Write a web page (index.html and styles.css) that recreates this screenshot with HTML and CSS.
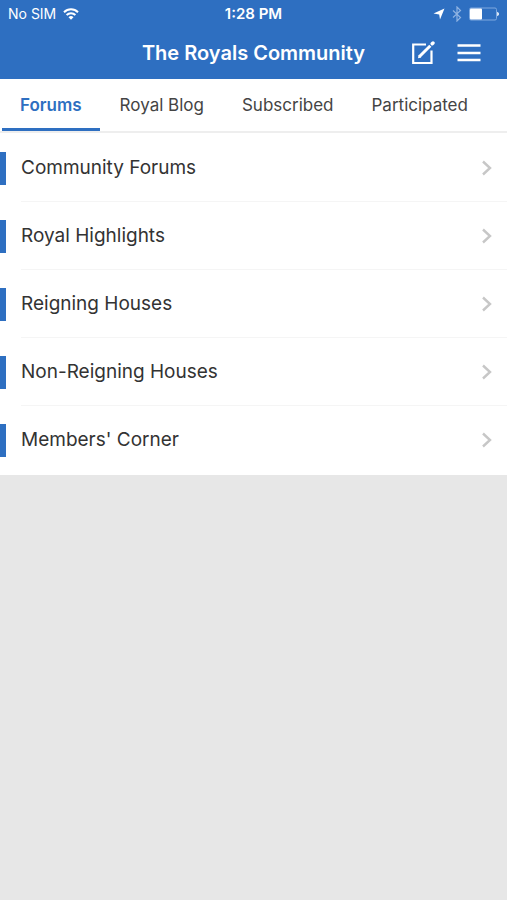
FILE: index.html
```html
<!DOCTYPE html>
<html lang="en">
<head>
  <meta charset="UTF-8">
  <meta name="viewport" content="width=device-width, initial-scale=1">
  <title>The Royals Community</title>
  <link rel="stylesheet" href="styles.css">
</head>
<body>
  <header class="header">
    <div class="status-bar">
      <div class="status-left">
        <span>No SIM</span>
        <svg class="wifi" width="16" height="12" viewBox="0 0 16 12" fill="none" stroke="#fff" stroke-width="2">
          <path d="M1 4.2a10 10 0 0 1 14 0"/>
          <path d="M3.6 7a6.3 6.3 0 0 1 8.8 0"/>
          <path d="M8 11.8 5.5 9.2a3.6 3.6 0 0 1 5 0z" fill="#fff" stroke="none"/>
        </svg>
      </div>
      <span class="time">1:28 PM</span>
      <div class="status-right">
        <svg width="12" height="12" viewBox="0 0 12 12" fill="#fff">
          <path d="M11.5 0.5 7 11.5 6.2 6.400 0.5 5.6z"/>
        </svg>
        <svg width="10" height="16" viewBox="0 0 10 16" fill="none" stroke="#8fb3e2" stroke-width="1.2">
          <path d="M1 4.5 8.5 11.5 5 15V1l3.500 3.500L1 11.500"/>
        </svg>
        <svg width="30" height="14" viewBox="0 0 30 14">
          <rect x="0.5" y="1" width="27" height="12" rx="1.500" fill="none" stroke="#7ea9df"/>
          <rect x="1" y="1.500" width="12" height="11" rx="1" fill="#fff"/>
          <path d="M28.200 4.800q1.800 0.700 1.800 2.200t-1.800 2.200z" fill="#fff"/>
        </svg>
      </div>
    </div>
    <div class="nav-bar">
      <h1 class="title">The Royals Community</h1>
      <div class="actions">
        <button type="button" class="icon-button" aria-label="New post">
          <svg width="24" height="24" viewBox="0 0 24 24" fill="none" stroke="#fff">
            <path d="M15 3.500H2.200V22H20.500V9.500" stroke-width="2.200"/>
            <path d="M8.500 15.500 19.300 4.700" stroke-width="3"/>
            <path d="M7 17.200 7.600 13.800 10.300 16.500z" fill="#fff" stroke="none"/>
            <path d="M21.200 2.800 22 2" stroke-width="3.400" stroke-linecap="round"/>
          </svg>
        </button>
        <button type="button" class="icon-button" aria-label="Menu">
          <svg width="24" height="24" viewBox="0 0 24 24" stroke="#fff" stroke-width="2.400">
            <path d="M0.500 4.500h23M0.500 12h23M0.500 19h23"/>
          </svg>
        </button>
      </div>
    </div>
  </header>

  <nav class="tabs">
    <a href="#" class="tab active">Forums</a>
    <a href="#" class="tab">Royal Blog</a>
    <a href="#" class="tab">Subscribed</a>
    <a href="#" class="tab">Participated</a>
  </nav>

  <main class="forum-list">
    <a href="#" class="forum">
      <span class="forum-body">
        Community Forums
        <svg class="chevron" width="10" height="16" viewBox="0 0 10 16"><path d="M1 1.500 8 8 1 14.500"/></svg>
      </span>
    </a>
    <a href="#" class="forum">
      <span class="forum-body">
        Royal Highlights
        <svg class="chevron" width="10" height="16" viewBox="0 0 10 16"><path d="M1 1.500 8 8 1 14.500"/></svg>
      </span>
    </a>
    <a href="#" class="forum">
      <span class="forum-body">
        Reigning Houses
        <svg class="chevron" width="10" height="16" viewBox="0 0 10 16"><path d="M1 1.500 8 8 1 14.500"/></svg>
      </span>
    </a>
    <a href="#" class="forum">
      <span class="forum-body">
        Non-Reigning Houses
        <svg class="chevron" width="10" height="16" viewBox="0 0 10 16"><path d="M1 1.500 8 8 1 14.500"/></svg>
      </span>
    </a>
    <a href="#" class="forum">
      <span class="forum-body">
        Members' Corner
        <svg class="chevron" width="10" height="16" viewBox="0 0 10 16"><path d="M1 1.500 8 8 1 14.500"/></svg>
      </span>
    </a>
  </main>
</body>
</html>
```

FILE: styles.css
```css
* {
  box-sizing: border-box;
}

body {
  margin: 0;
  font-family: Inter, "Liberation Sans", sans-serif;
  background: #e7e7e7;
  color: #333;
}

a {
  color: inherit;
  text-decoration: none;
}

svg {
  display: block;
}

/* header */
.header {
  background: #2e6fc1;
  color: #fff;
}

.status-bar {
  display: grid;
  grid-template-columns: 1fr auto 1fr;
  align-items: center;
  height: 27px;
  padding: 0 8px;
  font-size: 14px;
}

.status-left,
.status-right {
  display: flex;
  align-items: center;
  gap: 7px;
}

.status-right {
  justify-content: flex-end;
}

.time {
  font-size: 15px;
  font-weight: 600;
}

.nav-bar {
  display: grid;
  grid-template-columns: 1fr auto 1fr;
  align-items: center;
  height: 52px;
  padding: 0 26px;
}

.title {
  grid-column: 2;
  margin: 0;
  font-size: 20px;
  font-weight: 600;
}

.actions {
  display: flex;
  justify-content: flex-end;
  gap: 22px;
}

.icon-button {
  padding: 0;
  border: none;
  background: none;
  cursor: pointer;
}

/* tabs */
.tabs {
  display: flex;
  gap: 2px;
  height: 54px;
  padding-left: 2px;
  background: #fff;
  border-bottom: 2px solid #eee;
}

.tab {
  padding: 0 18px;
  font-size: 17px;
  line-height: 52px;
  color: #444;
}

.tab.active {
  color: #2e6fc1;
  font-weight: 600;
  border-bottom: 3px solid #2e6fc1;
}

/* forum list */
.forum-list {
  padding: 1px 0;
  background: #fff;
}

.forum {
  display: flex;
  align-items: center;
  height: 68px;
}

.forum::before {
  content: "";
  width: 6px;
  height: 33px;
  background: #2e6fc1;
}

.forum-body {
  flex: 1;
  display: flex;
  align-items: center;
  justify-content: space-between;
  margin-left: 15px;
  padding-right: 15px;
  font-size: 19px;
  line-height: 68px;
  box-shadow: inset 0 -1px #f5f5f5;
}

.forum:last-child .forum-body {
  box-shadow: none;
}

.chevron {
  fill: none;
  stroke: #c7c7c7;
  stroke-width: 2.4;
}
```
